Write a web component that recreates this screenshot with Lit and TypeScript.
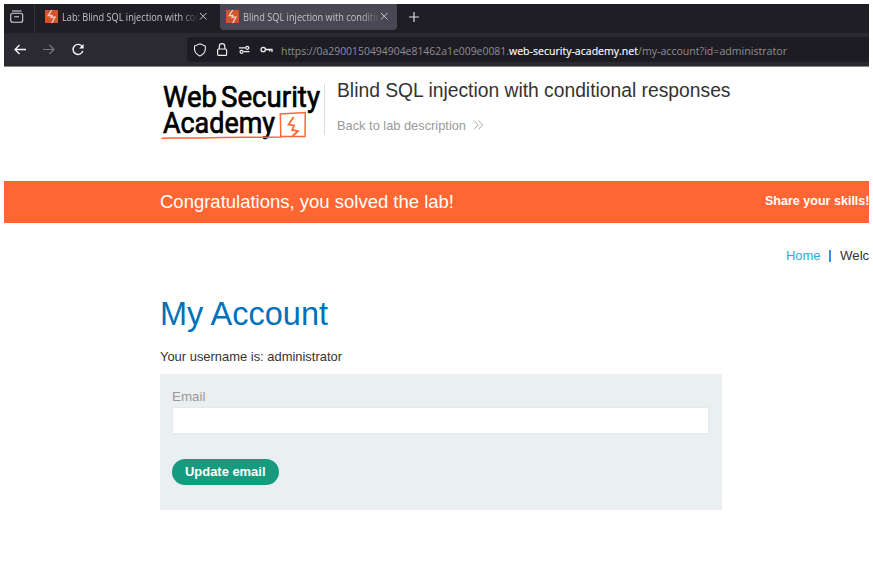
import { LitElement, html, css, svg } from "lit";
import { customElement } from "lit/decorators.js";

const FAVICON = html`<svg class="icon" width="13" height="13" viewBox="0 0 13 13">
  <rect width="13" height="13" fill="#d4532b" />
  <path d="M6.7 0L3.2 5.6H6.3L6 8.2M6.7 13L10 7.2H6.7L7 4.6" fill="none" stroke="#f3d5cb" stroke-width="1.3" />
</svg>`;

/* One line of text set to a known advance width. */
const line = (cls: string, text: string, width: number, height: number, baseline: number) => html`<svg
  class="line" width=${width} height=${height}>
  <text class=${cls} x="0" y=${baseline} textLength=${width} lengthAdjust="spacingAndGlyphs">${text}</text>
</svg>`;

@customElement("app-root")
export class AppRoot extends LitElement {
  static styles = css`
    :host { display: block; width: 873px; height: 575px; overflow: hidden; background: #fff;
      box-sizing: border-box; padding: 4px; font-family: "Liberation Sans", Arial, sans-serif; }
    * { box-sizing: border-box; }
    svg { display: block; flex: none; overflow: visible; }
    .window { width: 865px; height: 567px; overflow: hidden; }
    .tabs { display: flex; height: 29px; background: #1f1e25; }
    .view { width: 31px; border-right: 1px solid #35343c; padding: 6px 0 0 6px; }
    .tab { display: flex; width: 185px; height: 26px; padding: 6px 0 0 10px; }
    .tab.active { width: 177px; background: #484753; border-radius: 0 0 4px 4px; padding-left: 6px; }
    .caption { width: 136px; height: 14px; margin-left: 4px; overflow: hidden;
      -webkit-mask-image: linear-gradient(90deg, #000 118px, transparent 137px);
      mask-image: linear-gradient(90deg, #000 118px, transparent 137px); }
    .close { margin: 2px 0 0 1px; }
    .plus { margin: 8px 0 0 12px; }
    .nav { display: flex; height: 34px; background: #2b2a33; border-bottom: 1px solid #8a8583; }
    .buttons { display: flex; width: 183px; padding: 10px 0 0 10px; gap: 16px; }
    .address { display: flex; flex: 1; height: 25px; margin-top: 4px; background: #1d1c23;
      border-radius: 3px 0 0 3px; padding: 6px 0 0 6px; }
    .marks { display: flex; gap: 9px; width: 88px; }
    .tabtext { font: 10.2px "Open Sans", "Noto Sans", sans-serif; fill: #c3c2c7; }
    .url { font: 11.3px "Open Sans", "Noto Sans", sans-serif; fill: #8f8e96; }
    .host { font: 11.3px "Open Sans", "Noto Sans", sans-serif; fill: #fbfbfe; stroke: #fbfbfe; stroke-width: 0.15px; }
    .header { display: flex; height: 114px; padding: 15px 0 0 156px; }
    .logo { width: 164px; height: 58px; }
    .logotype { font: 400 29px Roboto, sans-serif; fill: #000; stroke: #000; stroke-width: 0.7px; }
    .about { height: 51px; margin-top: 2px; border-left: 1px solid #dcdcdc; padding-left: 12px; }
    .title { font-size: 20px; fill: #333332; }
    .back { display: flex; gap: 7px; margin-top: 10px; }
    .grey { font-size: 13.6px; fill: #999; }
    .about > .line { margin-top: -7px; }
    .banner { display: flex; justify-content: space-between; height: 42px; background: #ff6633;
      padding: 9px 0 0 155.5px; margin-bottom: 24px; }
    .congrats { font-size: 19px; fill: #fff; }
    .share { font-size: 13.6px; font-weight: 700; fill: #fff; }
    .links { display: flex; padding-left: 782px; height: 50px; }
    .home { font-size: 13.6px; fill: #29abe2; }
    .bar { flex: none; width: 1.5px; height: 12px; background: #3d8fdd; margin: 3px 9.5px 0 8.5px; }
    .dark { font-size: 13.6px; fill: #333332; }
    .account { padding-left: 156px; }
    .heading { font-size: 33.5px; fill: #0071bc; }
    .account > .line, .user { margin-left: -0.5px; }
    .user { margin-top: 5px; }
    .form { width: 562px; height: 136px; margin-top: 14px; background: #eaeff2; padding: 14px 13px 0 12px; }
    .input { display: block; width: 537px; height: 27px; margin-top: 2px; border: 1px solid #e3e9ec;
      background: #fff; border-radius: 0; }
    .update { display: flex; justify-content: center; width: 107px; height: 26px; margin-top: 25px;
      padding: 4px 0 0; border: 0; border-radius: 13px; background: #169b7f; }
  `;

  private tab(text: string, width: number, active: boolean) {
    return html`<div class="tab ${active ? "active" : ""}">
      ${FAVICON}
      <div class="caption">${line("tabtext", text, width, 14, 10.5)}</div>
      <svg class="close" width="8" height="8"><path d="M1 1L7.5 7.5M7.5 1L1 7.5" stroke="#c9c8cd" /></svg>
    </div>`;
  }

  render() {
    return html`<div class="window">
      <div class="tabs">
        <div class="view"><svg width="14" height="13" fill="none" stroke="#d2d1d6" stroke-width="1.1">
          <path d="M2 1H11.5" /><rect x=".7" y="3.2" width="12" height="9" rx="2" /><path d="M4.3 6.8H9" />
        </svg></div>
        ${this.tab("Lab: Blind SQL injection with con", 139, false)}
        ${this.tab("Blind SQL injection with conditio", 138, true)}
        <svg class="plus" width="10" height="10"><path d="M5 0V10M0 5H10" stroke="#dddce1" stroke-width="1.2" /></svg>
      </div>
      <div class="nav">
        <div class="buttons">
          <svg width="13" height="13" fill="none" stroke="#f5f5f8" stroke-width="1.3"><path d="M12 6.5H1M5.5 2L1 6.5L5.5 11" /></svg>
          <svg width="13" height="13" fill="none" stroke="#77767e" stroke-width="1.2"><path d="M0 6.5H11M6.5 2L11 6.5L6.5 11" /></svg>
          <svg width="13" height="13" fill="none" stroke="#f5f5f8" stroke-width="1.4"><path d="M10.2 3.6A5 5 0 1 0 10.8 8" /><path d="M11.6 1V5.4H7.2Z" fill="#f5f5f8" stroke="none" /></svg>
        </div>
        <div class="address">
          <div class="marks">
            <svg width="13" height="14" fill="none" stroke="#efeff2" stroke-width="1.1"><path d="M6.9 .8L12.3 3V6C12.3 9 9.8 11.6 6.9 13C3.9 11.6 1.5 9 1.5 6V3Z" /></svg>
            <svg width="13" height="14" fill="none" stroke="#efeff2" stroke-width="1.2"><rect x="2.6" y="6" width="9" height="6.4" rx="1" /><path d="M4.3 6V3.4A2.7 2.7 0 0 1 9.8 3.4V6" /></svg>
            <svg width="13" height="14" fill="none" stroke="#efeff2" stroke-width="1.3"><path d="M2 4.8H8M7 8.6H12.5" /><circle cx="10.3" cy="4.8" r="1.5" /><circle cx="4.6" cy="8.8" r="1.5" /></svg>
            <svg width="13" height="14" fill="none" stroke="#efeff2" stroke-width="1.3"><circle cx="4.2" cy="6.5" r="2.2" /><path d="M6.4 6.5H13V9M10.6 6.5V8.5" /></svg>
          </div>
          ${line("url", "https://0a2900150494904e81462a1e009e0081.", 228, 14, 12)}
          ${line("host", "web-security-academy.net", 129, 14, 12)}
          ${line("url", "/my-account?id=administrator", 149, 14, 12)}
        </div>
      </div>
      <div class="header">
        <svg class="logo" viewBox="160 82 164 58">
          ${svg`<text class="logotype" x="163" y="107.2" textLength="54" lengthAdjust="spacingAndGlyphs">Web</text>
          <text class="logotype" x="221" y="107.2" textLength="99" lengthAdjust="spacingAndGlyphs">Security</text>
          <text class="logotype" x="163" y="133.4" textLength="112" lengthAdjust="spacingAndGlyphs">Academy</text>`}
          <path d="M161.5 138.2C180 137.2 190 138.8 210 137.8S250 137.6 280.8 136.9L280.3 114L305.3 112.6L305 136.4L281 136.5" fill="none" stroke="#ff6633" stroke-width="1.5" />
          <path d="M293.6 117L288.5 124.6L294 125.4L292.2 130L298 131.2L292.5 136" fill="none" stroke="#ff6633" stroke-width="1.8" />
        </svg>
        <div class="about">
          ${line("title", "Blind SQL injection with conditional responses", 393.5, 29, 19.5)}
          <div class="back">
            ${line("grey", "Back to lab description", 129, 18, 14)}
            <svg width="11" height="18" fill="none" stroke="#aaa"><path d="M1 4.5L5 9L1 13.5M5.5 4.5L9.5 9L5.5 13.5" /></svg>
          </div>
        </div>
      </div>
      <div class="banner">
        ${line("congrats", "Congratulations, you solved the lab!", 294, 24, 18)}
        ${line("share", "Share your skills!", 104.5, 20, 15)}
      </div>
      <div class="links">
        ${line("home", "Home", 34.5, 18, 13)}
        <div class="bar"></div>
        ${line("dark", "Welcome", 55, 18, 13)}
      </div>
      <div class="account">
        ${line("heading", "My Account", 168, 40, 28)}
        <div class="user">${line("dark", "Your username is: administrator", 182, 18, 19)}</div>
        <div class="form">
          ${line("grey", "Email", 33.5, 17, 13)}
          <input class="input" aria-label="Email" />
          <button class="update">${line("share", "Update email", 80.5, 18, 13)}</button>
        </div>
      </div>
    </div>`;
  }
}
